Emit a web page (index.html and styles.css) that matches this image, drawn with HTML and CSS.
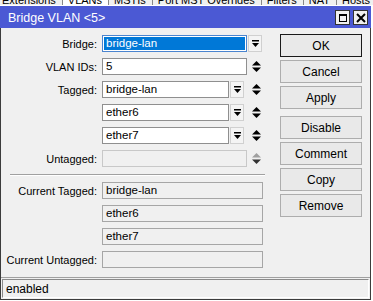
FILE: index.html
```html
<!DOCTYPE html>
<html lang="en">
  <head>
    <meta charset="UTF-8" />
    <title>Bridge VLAN &lt;5&gt;</title>
    <link rel="stylesheet" href="styles.css">
  </head>
  <body>
    <div class="tabs">
      <span class="tab">Extensions</span>
      <span class="tab active">VLANs</span>
      <span class="tab">MSTIs</span>
      <span class="tab">Port MST Overrides</span>
      <span class="tab">Filters</span>
      <span class="tab">NAT</span>
      <span class="tab">Hosts</span>
    </div>

    <div class="window">
      <div class="titlebar">
        <span class="title">Bridge VLAN &lt;5&gt;</span>
        <div class="ctrls">
          <span class="ctrl max"><span class="max-box"></span></span>
          <span class="ctrl close">
            <svg width="10" height="10" viewBox="0 0 10 10"><path d="M1 1L9 9M9 1L1 9" stroke="#000" stroke-width="2"/></svg>
          </span>
        </div>
      </div>

      <div class="content">
        <div class="form">
          <div class="row">
            <label>Bridge:</label>
            <div class="field">
              <div class="input wide selected">bridge-lan</div>
              <span class="dd"><svg width="7" height="7" viewBox="0 0 7 7"><rect x="0" y="0" width="7" height="1.5"/><polygon points="0,3 7,3 3.5,7"/></svg></span>
            </div>
          </div>
          <div class="row">
            <label>VLAN IDs:</label>
            <div class="field">
              <div class="input wide">5</div>
              <span class="spin"><svg width="9" height="11" viewBox="0 0 9 11"><polygon points="0,4.5 9,4.5 4.5,0"/><polygon points="0,6.5 9,6.5 4.5,11"/></svg></span>
            </div>
          </div>
          <div class="row">
            <label>Tagged:</label>
            <div class="field">
              <div class="input narrow">bridge-lan</div>
              <span class="dd"><svg width="7" height="7" viewBox="0 0 7 7"><rect x="0" y="0" width="7" height="1.5"/><polygon points="0,3 7,3 3.5,7"/></svg></span>
              <span class="spin"><svg width="9" height="11" viewBox="0 0 9 11"><polygon points="0,4.5 9,4.5 4.5,0"/><polygon points="0,6.5 9,6.5 4.5,11"/></svg></span>
            </div>
          </div>
          <div class="row">
            <label></label>
            <div class="field">
              <div class="input narrow">ether6</div>
              <span class="dd"><svg width="7" height="7" viewBox="0 0 7 7"><rect x="0" y="0" width="7" height="1.5"/><polygon points="0,3 7,3 3.5,7"/></svg></span>
              <span class="spin"><svg width="9" height="11" viewBox="0 0 9 11"><polygon points="0,4.5 9,4.5 4.5,0"/><polygon points="0,6.5 9,6.5 4.5,11"/></svg></span>
            </div>
          </div>
          <div class="row">
            <label></label>
            <div class="field">
              <div class="input narrow">ether7</div>
              <span class="dd"><svg width="7" height="7" viewBox="0 0 7 7"><rect x="0" y="0" width="7" height="1.5"/><polygon points="0,3 7,3 3.5,7"/></svg></span>
              <span class="spin"><svg width="9" height="11" viewBox="0 0 9 11"><polygon points="0,4.5 9,4.5 4.5,0"/><polygon points="0,6.5 9,6.5 4.5,11"/></svg></span>
            </div>
          </div>
          <div class="row">
            <label>Untagged:</label>
            <div class="field">
              <div class="input wide disabled"></div>
              <span class="spin"><svg width="9" height="11" viewBox="0 0 9 11"><polygon points="0,4.5 9,4.5 4.5,0" fill="#a0a0a0"/><polygon points="0,6.5 9,6.5 4.5,11" fill="#333"/></svg></span>
            </div>
          </div>

          <div class="sep"></div>

          <div class="row">
            <label>Current Tagged:</label>
            <div class="field"><div class="input full readonly">bridge-lan</div></div>
          </div>
          <div class="row">
            <label></label>
            <div class="field"><div class="input full readonly">ether6</div></div>
          </div>
          <div class="row">
            <label></label>
            <div class="field"><div class="input full readonly">ether7</div></div>
          </div>
          <div class="row">
            <label>Current Untagged:</label>
            <div class="field"><div class="input full readonly"></div></div>
          </div>
        </div>

        <div class="buttons">
          <button class="default">OK</button>
          <button>Cancel</button>
          <button>Apply</button>
          <button class="spaced">Disable</button>
          <button>Comment</button>
          <button>Copy</button>
          <button>Remove</button>
        </div>
      </div>

      <div class="status">
        <div class="status-box">enabled</div>
      </div>
    </div>
  </body>
</html>
```

FILE: styles.css
```css
body {
  font-family: 'Liberation Sans', Arial, sans-serif;
  font-size: 11px;
  background-color: #ffffff;
  margin: 0;
  width: 373px;
  height: 301px;
  overflow: hidden;
}

.tabs {
  height: 5px;
  overflow: hidden;
  background-color: #f0f0f0;
  border-bottom: 1px solid #ffffff;
  display: flex;
  white-space: nowrap;
}

.tab {
  margin-top: -6px;
  line-height: 12px;
  font-size: 11px;
  padding: 0 6px 0 5px;
  border-right: 1px solid #888;
  color: #000;
}

.tab:first-child {
  padding-left: 2px;
}

.tab.active {
  background-color: #ffffff;
}

.window {
  width: 369px;
  border: 1px solid #3c3c3c;
  border-top: none;
  background-color: #f0f0f0;
}

.titlebar {
  height: 22px;
  background-color: #4b59d4;
  display: flex;
  align-items: center;
  justify-content: space-between;
  padding: 1px 3px 0 8px;
  box-sizing: border-box;
  margin: 0 -1px;
}

.title {
  color: #ffffff;
  font-size: 12.5px;
}

.ctrls {
  display: flex;
  gap: 3px;
}

.ctrl {
  width: 13px;
  height: 13px;
  background-color: #f0f0f0;
  border: 1px solid #333;
  display: flex;
  align-items: center;
  justify-content: center;
}

.max-box {
  width: 8px;
  height: 8px;
  border: 1px solid #000;
  border-top-width: 2px;
  box-sizing: border-box;
}

.content {
  display: flex;
  padding-top: 6px;
}

.form {
  width: 264px;
}

.row {
  display: flex;
  align-items: center;
  height: 17px;
  margin-top: 6px;
}

.row:first-child {
  margin-top: 1px;
}

.row label {
  width: 96px;
  text-align: right;
  padding-right: 5px;
  color: #000;
  font-size: 11px;
}

.field {
  display: flex;
  align-items: center;
  width: 161px;
  height: 17px;
}

.input {
  height: 17px;
  box-sizing: border-box;
  border: 1px solid #8f8f8f;
  background-color: #ffffff;
  padding: 0 3px;
  line-height: 15px;
  font-size: 11.5px;
  white-space: nowrap;
  overflow: hidden;
}

.input.wide {
  width: 145px;
}

.input.narrow {
  width: 127px;
}

.input.full {
  width: 161px;
}

.input.selected {
  border-color: #4a84cf;
  background-color: #0078d7;
  color: #ffffff;
  box-shadow: inset 0 0 0 1px #ffffff;
}

.input.disabled {
  background-color: #f0f0f0;
  border-color: #c8c8c8;
}

.input.readonly {
  background-color: #f0f0f0;
  border-color: #a6a6a6;
}

.dd {
  width: 14px;
  height: 17px;
  box-sizing: border-box;
  margin-left: 1px;
  border: 1px solid #d0d0d0;
  background-color: #f4f4f4;
  display: flex;
  align-items: center;
  justify-content: center;
}

.spin {
  margin-left: auto;
  width: 14px;
  display: flex;
  justify-content: center;
}

.sep {
  margin: 7px 0 0 9px;
  height: 0;
  border-top: 1px solid #a0a0a0;
  border-bottom: 1px solid #ffffff;
}

.sep + .row {
  margin-top: 6px;
}

.buttons {
  margin-left: 15px;
  display: flex;
  flex-direction: column;
  gap: 3px;
}

button {
  width: 82px;
  height: 23px;
  font-family: inherit;
  font-size: 12px;
  background-color: #e9e9e9;
  border: 1px solid #adadad;
  color: #000;
  padding: 0;
}

button.default {
  border-color: #1a1a1a;
}

button.spaced {
  margin-top: 4px;
}

.status {
  margin-top: 9px;
  border-top: 1px solid #a0a0a0;
  padding: 1px;
}

.status-box {
  height: 19px;
  line-height: 18px;
  box-sizing: border-box;
  border: 1px solid #8a8a8a;
  border-right-color: #ffffff;
  border-bottom-color: #ffffff;
  padding-left: 3px;
  font-size: 12px;
}
```
